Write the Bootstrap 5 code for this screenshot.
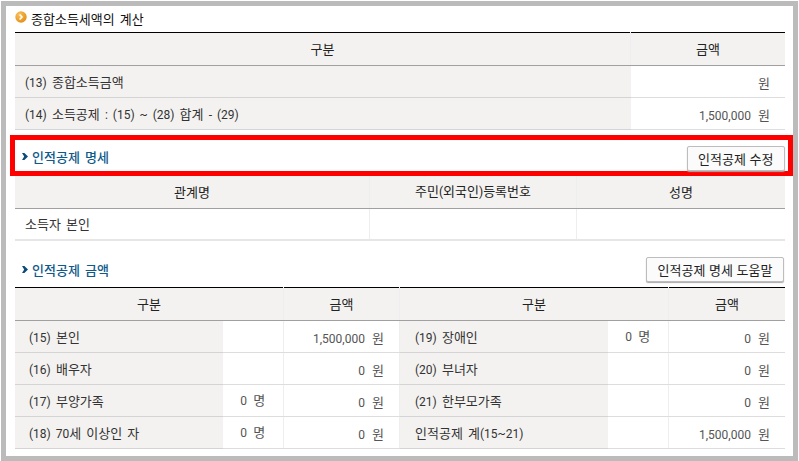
<!DOCTYPE html>
<html lang="ko">
<head>
<meta charset="utf-8">
<title>종합소득세액의 계산</title>
<link rel="stylesheet" href="https://cdn.jsdelivr.net/npm/bootstrap@5.3.0/dist/css/bootstrap.min.css">
<style>
html,body{background:#fff;height:461px;overflow:hidden}
body{font-family:"Noto Sans CJK KR",sans-serif;font-size:13px;color:#333;padding:1px 1px 0 1px;word-spacing:1.5px}
.la{font-family:Roboto,sans-serif;font-size:12px}
.frame{border:5px solid #bbb;width:797px;height:460px;padding:0 8px 0 9px;overflow:hidden}
.sec-title{height:26px;color:#111;font-size:13px;font-weight:400;margin:0;gap:5px}
.orange-dot{width:12px;height:12px;margin-top:-4px;margin-right:-1px}
.dt{table-layout:fixed;width:770px;margin:0;border-collapse:collapse;--bs-table-bg:transparent;color:#333}
.dt>*>tr>*{padding:0 10px;height:32px;vertical-align:middle;border:0;border-bottom:1px solid #ddd;border-right:1px solid #eee;font-weight:400;box-shadow:none;line-height:16px;color:#333}
.dt>*>tr>*:last-child{border-right:0}
.dt thead tr>*{background:#f3f2f0;text-align:center;border-bottom:1px solid #a0a0a0;color:#222}
.dt.ruled thead tr>*{border-top:1px solid #000;height:33px}
.dt .lab{background:#f3f2f0;color:#333;border-bottom-color:#d4d4d4;border-right:0;padding-top:2px}
.dt .num{text-align:right;padding-right:15px;padding-top:3px;color:#555}
.dt .cnt{text-align:center;color:#555;padding-bottom:1px}
.dt .ind{padding-left:14px}
.dt .ind2{padding-left:15px}
.dt .closing>*{border-bottom:2px solid #e6e6e6;padding-top:1px}
.lab .la{word-spacing:2px}
.num b{font-weight:400;margin-left:2px}
.cnt b{font-weight:400;margin-left:1px}
.hl{border:5px solid #f00;height:41px;margin:5px -8px 0 -5px;padding:0 3px 0 7px}
.hl .sub-title{margin-top:2px}
.sub-title{color:#0e5a8a;font-size:13px;margin:0;font-weight:500;gap:4px}
.chev{width:6px;height:7px}
.gbtn{--bs-btn-padding-x:10.5px;--bs-btn-padding-y:0;--bs-btn-font-size:13px;--bs-btn-border-radius:2px;--bs-btn-bg:#fbfbfb;--bs-btn-border-color:#bdbdbd;--bs-btn-color:#222;height:25px;line-height:21px;box-shadow:0 1px 1px #aaa}
.hl .gbtn{margin-top:5px}
.sub-row{height:46px;padding-top:16px;padding-bottom:5px;padding-right:1px;padding-left:7px;align-items:center}
</style>
</head>
<body>
<div class="frame">
  <h2 class="sec-title d-flex align-items-center">
    <svg class="orange-dot" viewBox="0 0 12 12"><defs><radialGradient id="og" cx=".35" cy=".3" r=".8"><stop offset="0" stop-color="#fbc15a"/><stop offset="1" stop-color="#e38a12"/></radialGradient></defs><circle cx="6" cy="6" r="5.7" fill="url(#og)"/><path d="M4.6 3.5L7 6 4.6 8.5" fill="none" stroke="#fff" stroke-width="1.6"/></svg>
    종합소득세액의 계산
  </h2>
  <table class="table dt ruled">
    <colgroup><col style="width:615.5px"><col></colgroup>
    <thead><tr><th>구분</th><th>금액</th></tr></thead>
    <tbody>
      <tr><td class="lab"><span class="la">(13)</span> 종합소득금액</td><td class="num"><b>원</b></td></tr>
      <tr><td class="lab"><span class="la">(14)</span> 소득공제 <span class="la">: (15) ~ (28)</span> 합계 <span class="la">- (29)</span></td><td class="num"><span class="la">1,500,000</span> <b>원</b></td></tr>
    </tbody>
  </table>
  <div class="hl d-flex justify-content-between align-items-center">
    <h3 class="sub-title d-flex align-items-center">
      <svg class="chev" viewBox="0 0 6 7"><path d="M0 0h2.4L6 3.5 2.4 7H0l2.2-3.5z" fill="#0e4a78"/></svg>
      인적공제 명세
    </h3>
    <button type="button" class="btn gbtn">인적공제 수정</button>
  </div>
  <table class="table dt">
    <colgroup><col style="width:354.5px"><col style="width:207px"><col></colgroup>
    <thead><tr><th>관계명</th><th>주민<span class="la">(</span>외국인<span class="la">)</span>등록번호</th><th>성명</th></tr></thead>
    <tbody><tr class="closing"><td>소득자 본인</td><td></td><td></td></tr></tbody>
  </table>
  <div class="sub-row d-flex justify-content-between">
    <h3 class="sub-title d-flex align-items-center">
      <svg class="chev" viewBox="0 0 6 7"><path d="M0 0h2.4L6 3.5 2.4 7H0l2.2-3.5z" fill="#0e4a78"/></svg>
      인적공제 금액
    </h3>
    <button type="button" class="btn gbtn">인적공제 명세 도움말</button>
  </div>
  <table class="table dt ruled">
    <colgroup><col style="width:207.5px"><col style="width:61px"><col style="width:116px"><col style="width:208px"><col style="width:61px"><col></colgroup>
    <thead><tr><th colspan="2">구분</th><th>금액</th><th colspan="2">구분</th><th>금액</th></tr></thead>
    <tbody>
      <tr><td class="lab ind"><span class="la">(15)</span> 본인</td><td></td><td class="num"><span class="la">1,500,000</span> <b>원</b></td><td class="lab ind2"><span class="la">(19)</span> 장애인</td><td class="cnt"><span class="la">0</span> <b>명</b></td><td class="num"><span class="la">0</span> <b>원</b></td></tr>
      <tr><td class="lab ind"><span class="la">(16)</span> 배우자</td><td></td><td class="num"><span class="la">0</span> <b>원</b></td><td class="lab ind2"><span class="la">(20)</span> 부녀자</td><td></td><td class="num"><span class="la">0</span> <b>원</b></td></tr>
      <tr><td class="lab ind"><span class="la">(17)</span> 부양가족</td><td class="cnt"><span class="la">0</span> <b>명</b></td><td class="num"><span class="la">0</span> <b>원</b></td><td class="lab ind2"><span class="la">(21)</span> 한부모가족</td><td></td><td class="num"><span class="la">0</span> <b>원</b></td></tr>
      <tr><td class="lab ind"><span class="la">(18) 70</span>세 이상인 자</td><td class="cnt"><span class="la">0</span> <b>명</b></td><td class="num"><span class="la">0</span> <b>원</b></td><td class="lab ind2">인적공제 계<span class="la">(15~21)</span></td><td></td><td class="num"><span class="la">1,500,000</span> <b>원</b></td></tr>
    </tbody>
  </table>
</div>
<script src="https://cdn.jsdelivr.net/npm/bootstrap@5.3.0/dist/js/bootstrap.bundle.min.js"></script>
</body>
</html>
